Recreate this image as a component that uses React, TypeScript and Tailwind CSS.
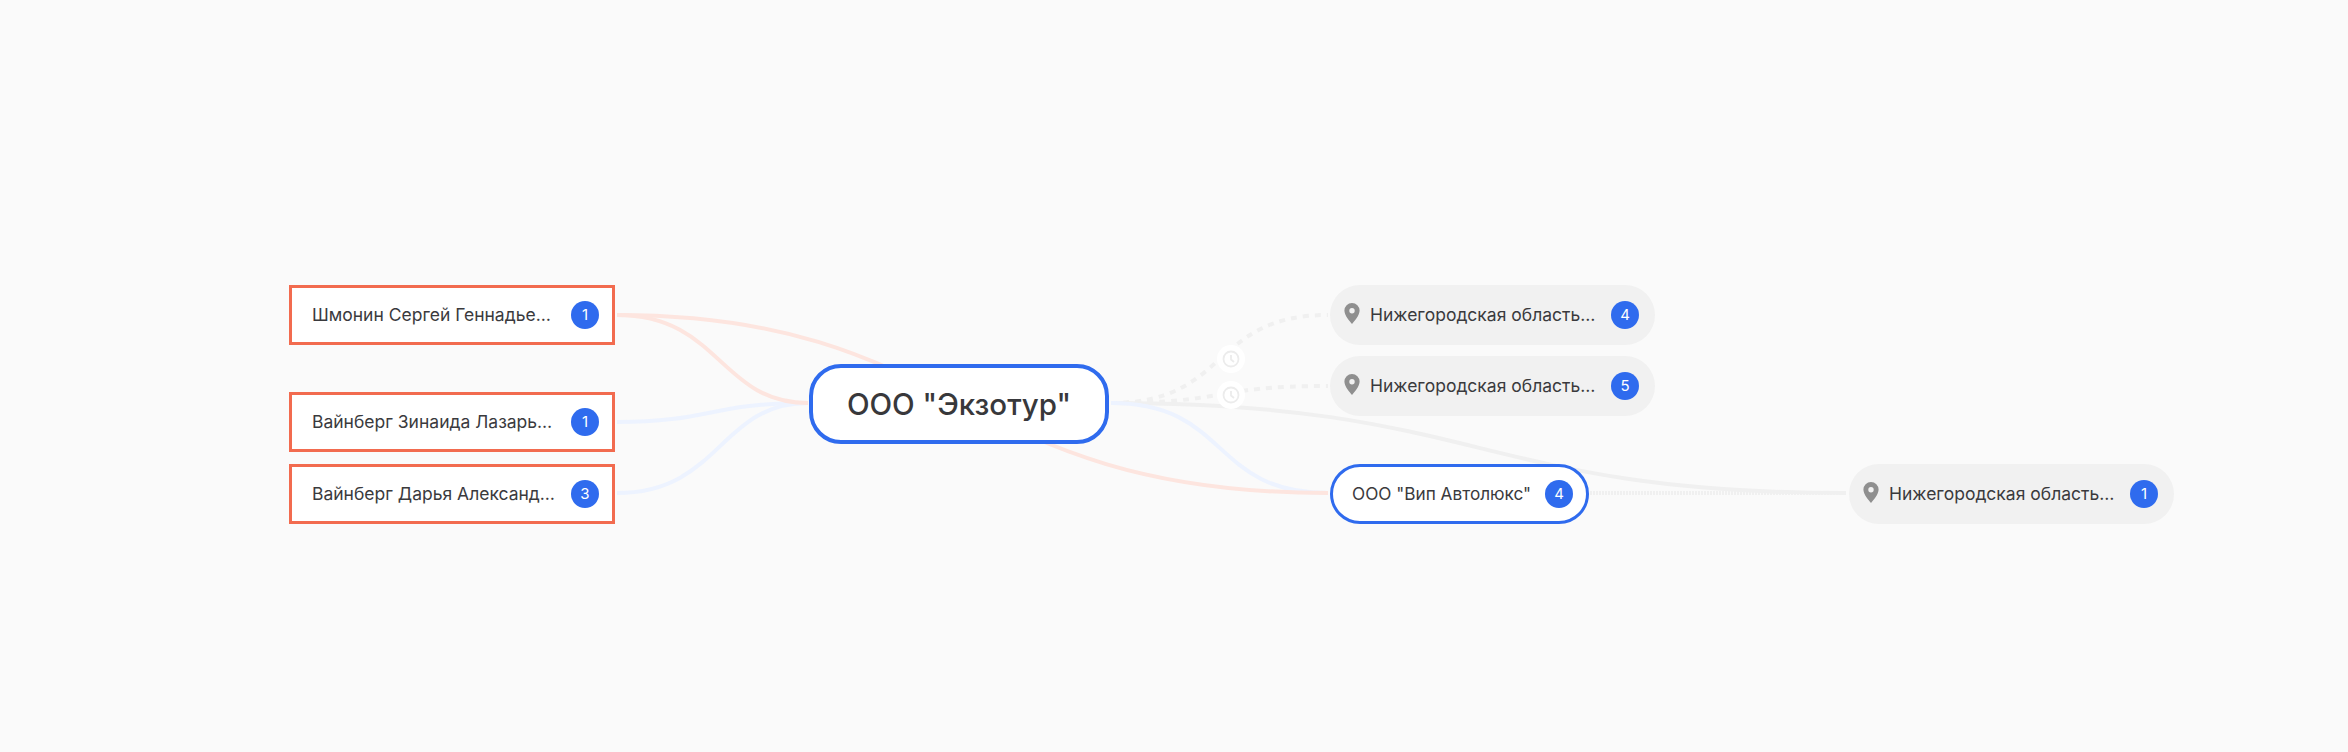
import React from "react";

const FONT = "font-['Inter','Noto_Sans',sans-serif]";

function Badge({ n }: { n: number }) {
  return (
    <span className="flex h-[28px] w-[28px] shrink-0 items-center justify-center rounded-full bg-[#2f6bee] text-[15px] text-white">
      {n}
    </span>
  );
}

function PersonNode({ name, n, pos }: { name: string; n: number; pos: string }) {
  return (
    <div className={`absolute flex h-[60px] w-[326px] items-center justify-between border-[3px] border-[#f26b4f] bg-white pl-[20px] pr-[13px] ${pos}`}>
      <span className="whitespace-nowrap text-[17.5px] text-[#3a3a3d]">{name}</span>
      <Badge n={n} />
    </div>
  );
}

function RegionNode({ n, pos }: { n: number; pos: string }) {
  return (
    <div className={`absolute flex h-[60px] w-[325px] items-center rounded-[30px] bg-[#f1f1f1] pl-[14px] pr-[16px] ${pos}`}>
      <svg width="16" height="21" viewBox="0 0 16 21" className="mb-[4px] mr-[10px] shrink-0">
        <path
          fillRule="evenodd"
          d="M8 0a7.6 7.6 0 0 1 7.6 7.6C15.600 12.500 10.500 18.300 8 21 5.500 18.300.400 12.500.400 7.600A7.600 7.600 0 0 1 8 0Zm0 5a2.700 2.700 0 1 0 0 5.400A2.700 2.700 0 0 0 8 5Z"
          fill="#8f8f8f"
        />
      </svg>
      <span className="whitespace-nowrap text-[17.5px] text-[#3a3a3d]">Нижегородская область…</span>
      <span className="ml-auto">
        <Badge n={n} />
      </span>
    </div>
  );
}

function ClockMark({ pos }: { pos: string }) {
  return (
    <div className={`absolute flex h-[28px] w-[28px] items-center justify-center rounded-full bg-white ${pos}`}>
      <svg width="20" height="20" viewBox="0 0 20 20" fill="none" stroke="#ececec" strokeWidth="1.800">
        <circle cx="10" cy="10" r="7.500" />
        <path d="M10 6v4.500l3 2.500" />
      </svg>
    </div>
  );
}

export default function App() {
  return (
    <div className={`relative h-[752px] w-[2348px] overflow-hidden bg-[#fafafa] ${FONT}`}>
      {/* links between nodes */}
      <svg width="2348" height="752" className="absolute left-0 top-0" fill="none" strokeWidth="4">
        <g stroke="#f0f0f0">
          <path d="M1111 403C1480 403 1480 493 1846 493" />
          <path d="M1590 493H1846" strokeDasharray="2 1" />
          <path d="M1111 403C1230 403 1210 315 1328 315" strokeDasharray="6 6" />
          <path d="M1111 403C1230 403 1210 386 1328 386" strokeDasharray="6 6" />
        </g>
        <g stroke="#edf3ff">
          <path d="M617 422C710 422 710 403 808 403" />
          <path d="M617 493C720 493 720 403 808 403" />
          <path d="M1111 403C1230 403 1210 493 1328 493" />
        </g>
        <g stroke="#fde5df">
          <path d="M617 315C720 315 720 403 808 403" />
          <path d="M617 315C960 315 960 493 1328 493" />
        </g>
      </svg>

      <PersonNode name="Шмонин Сергей Геннадье…" n={1} pos="left-[289px] top-[285px]" />
      <PersonNode name="Вайнберг Зинаида Лазарь…" n={1} pos="left-[289px] top-[392px]" />
      <PersonNode name="Вайнберг Дарья Александ…" n={3} pos="left-[289px] top-[464px]" />

      <div className="absolute left-[809px] top-[364px] flex h-[80px] w-[300px] items-center justify-center rounded-[32px] border-[4px] border-[#2f6bee] bg-white text-[29.500px] font-[550] text-[#38383b]">
        ООО "Экзотур"
      </div>

      <ClockMark pos="left-[1217px] top-[345px]" />
      <ClockMark pos="left-[1217px] top-[381px]" />

      <RegionNode n={4} pos="left-[1330px] top-[285px]" />
      <RegionNode n={5} pos="left-[1330px] top-[356px]" />

      <div className="absolute left-[1330px] top-[464px] flex h-[60px] w-[259px] items-center justify-between rounded-[30px] border-[3px] border-[#2f6bee] bg-white pl-[19px] pr-[13px] text-[17.2px] text-[#3a3a3d]">
        <span className="whitespace-nowrap">ООО "Вип Автолюкс"</span>
        <Badge n={4} />
      </div>

      <RegionNode n={1} pos="left-[1849px] top-[464px]" />
    </div>
  );
}
